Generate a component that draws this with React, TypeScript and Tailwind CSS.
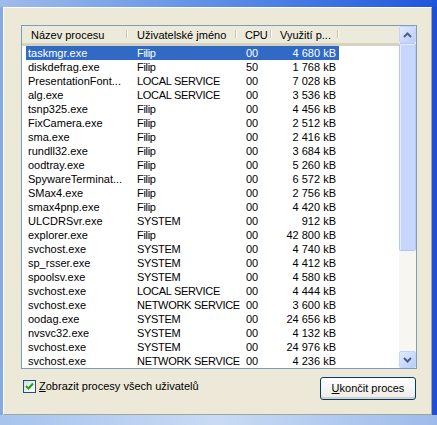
import React from "react";

type Proc = { name: string; user: string; cpu: string; mem: string };

const procs: Proc[] = [
  { name: "taskmgr.exe", user: "Filip", cpu: "00", mem: "4 680 kB" },
  { name: "diskdefrag.exe", user: "Filip", cpu: "50", mem: "1 768 kB" },
  { name: "PresentationFont...", user: "LOCAL SERVICE", cpu: "00", mem: "7 028 kB" },
  { name: "alg.exe", user: "LOCAL SERVICE", cpu: "00", mem: "3 536 kB" },
  { name: "tsnp325.exe", user: "Filip", cpu: "00", mem: "4 456 kB" },
  { name: "FixCamera.exe", user: "Filip", cpu: "00", mem: "2 512 kB" },
  { name: "sma.exe", user: "Filip", cpu: "00", mem: "2 416 kB" },
  { name: "rundll32.exe", user: "Filip", cpu: "00", mem: "3 684 kB" },
  { name: "oodtray.exe", user: "Filip", cpu: "00", mem: "5 260 kB" },
  { name: "SpywareTerminat...", user: "Filip", cpu: "00", mem: "6 572 kB" },
  { name: "SMax4.exe", user: "Filip", cpu: "00", mem: "2 756 kB" },
  { name: "smax4pnp.exe", user: "Filip", cpu: "00", mem: "4 420 kB" },
  { name: "ULCDRSvr.exe", user: "SYSTEM", cpu: "00", mem: "912 kB" },
  { name: "explorer.exe", user: "Filip", cpu: "00", mem: "42 800 kB" },
  { name: "svchost.exe", user: "SYSTEM", cpu: "00", mem: "4 740 kB" },
  { name: "sp_rsser.exe", user: "SYSTEM", cpu: "00", mem: "4 412 kB" },
  { name: "spoolsv.exe", user: "SYSTEM", cpu: "00", mem: "4 580 kB" },
  { name: "svchost.exe", user: "LOCAL SERVICE", cpu: "00", mem: "4 444 kB" },
  { name: "svchost.exe", user: "NETWORK SERVICE", cpu: "00", mem: "3 600 kB" },
  { name: "oodag.exe", user: "SYSTEM", cpu: "00", mem: "24 656 kB" },
  { name: "nvsvc32.exe", user: "SYSTEM", cpu: "00", mem: "4 132 kB" },
  { name: "svchost.exe", user: "SYSTEM", cpu: "00", mem: "24 976 kB" },
  { name: "svchost.exe", user: "NETWORK SERVICE", cpu: "00", mem: "4 236 kB" },
];

function HeaderSep() {
  return (
    <div className="absolute right-0 top-[4px] bottom-[5px] flex">
      <div className="w-px bg-[#c7c5b2]" />
      <div className="w-px bg-white" />
    </div>
  );
}

function Chevron({ up }: { up?: boolean }) {
  return (
    <svg width="9" height="6" viewBox="0 0 9 6">
      <path
        d={up ? "M1 5 L4.5 1.5 L8 5" : "M1 1 L4.5 4.5 L8 1"}
        fill="none"
        stroke="#4d6185"
        strokeWidth="2"
      />
    </svg>
  );
}

function ArrowButton({ up }: { up?: boolean }) {
  return (
    <div className="h-[17px] rounded-[2px] border border-[#c3d3fd] bg-gradient-to-br from-[#e2ebfe] to-[#b9cdf9] flex items-center justify-center">
      <Chevron up={up} />
    </div>
  );
}

export default function App() {
  const font = { fontFamily: '"Liberation Sans", Arial, sans-serif' };
  return (
    <div
      className="w-[437px] h-[425px] overflow-hidden flex flex-col bg-[#8db0e6] text-[11px] text-black"
      style={font}
    >
      <div className="h-[7px] bg-gradient-to-r from-[#9fbce9] via-[#5c8ee6] to-[#1f55dc]" />
      <div className="flex h-[408px]">
        <div className="w-[3px] bg-[#86a9e2]" />
        <div className="flex-1 bg-[#ece9d8] border-l border-t border-white border-r border-r-[#aca899] border-b border-b-[#a7a392] pl-[17px] pr-[14px] pt-[17px] flex flex-col">
          {/* list view */}
          <div className="w-[396px] h-[344px] border border-[#7f9db9] bg-white flex">
            <div className="flex-1 flex flex-col">
              <div className="h-[20px] flex bg-[#ebeadb] border-b-[3px] border-[#d6d2c2] leading-[19px]">
                <div className="relative w-[106px] pl-[9px]">Název procesu<HeaderSep /></div>
                <div className="relative w-[109px] pl-[9px]">Uživatelské jméno<HeaderSep /></div>
                <div className="relative w-[35px] pl-[8px] tracking-[-0.3px]">CPU<HeaderSep /></div>
                <div className="relative w-[67px] pl-[8px]">Využití p...<HeaderSep /></div>
              </div>
              <div className="flex flex-col pl-[4px]">
                {procs.map((p, i) => (
                  <div
                    key={i}
                    className={
                      "h-[14px] leading-[15px] flex w-[313px] whitespace-nowrap " +
                      (i === 0 ? "bg-[#316ac5] text-white" : "")
                    }
                  >
                    <div className="w-[102px] pl-[2px] overflow-hidden">{p.name}</div>
                    <div className="w-[109px] pl-[9px] tracking-[-0.3px]">{p.user}</div>
                    <div className="w-[35px] pl-[9px]">{p.cpu}</div>
                    <div className="w-[67px] pr-[3px] text-right">{p.mem}</div>
                  </div>
                ))}
              </div>
            </div>
            {/* scrollbar */}
            <div className="w-[17px] bg-[#f7f6f1] flex flex-col">
              <ArrowButton up />
              <div className="h-[208px] rounded-[2px] border border-[#b4c8f6] bg-[#c6d6fc] shadow-[inset_1px_1px_0_#e6eeff]" />
              <div className="flex-1" />
              <ArrowButton />
            </div>
          </div>
          {/* bottom controls */}
          <div className="flex items-start justify-between mt-[8px] pl-[2px]">
            <label className="flex items-center gap-[3px] mt-[1px]">
              <span className="w-[13px] h-[13px] border border-[#1c5180] bg-gradient-to-br from-[#dcdcd7] to-white flex items-center justify-center">
                <svg width="9" height="9" viewBox="0 0 9 9">
                  <path d="M1 4 L3.5 6.5 L8 1.5" fill="none" stroke="#21a121" strokeWidth="2" />
                </svg>
              </span>
              <span>
                <span className="underline">Z</span>obrazit procesy všech uživatelů
              </span>
            </label>
            <button className="w-[96px] h-[23px] rounded-[3px] border border-[#003c74] bg-gradient-to-b from-white to-[#ecebe6] shadow-[inset_0_-2px_0_#d6d0c5] mr-[1px]">
              <span className="underline">U</span>končit proces
            </button>
          </div>
        </div>
        <div className="w-[5px] bg-[#1f4fd8]" />
      </div>
      <div className="flex-1 bg-gradient-to-r from-[#a7c3ee] via-[#c9dbf4] to-[#9dbbea]" />
    </div>
  );
}
